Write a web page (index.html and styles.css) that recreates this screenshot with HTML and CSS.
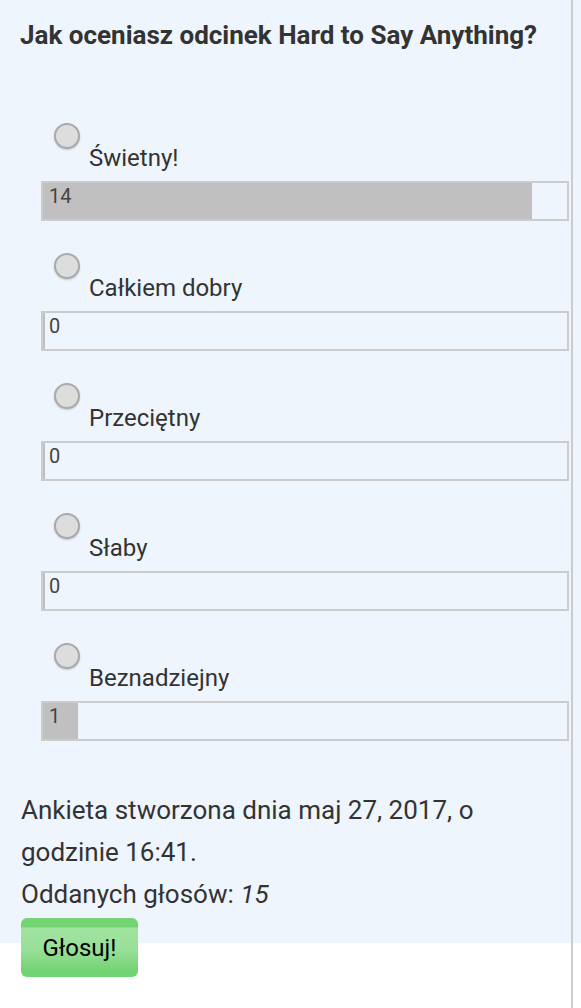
FILE: index.html
```html
<!DOCTYPE html>
<html lang="pl">
<head>
<meta charset="utf-8">
<title>Ankieta</title>
<link rel="stylesheet" href="styles.css">
</head>
<body>
<div class="panel">
  <h1 class="question">Jak oceniasz odcinek Hard to Say Anything?</h1>
  <ul class="options">
    <li class="option">
      <div class="choice"><span class="radio"></span><span class="label">Świetny!</span></div>
      <div class="bar"><div class="fill" style="width:93.333%"></div><span class="count">14</span></div>
    </li>
    <li class="option">
      <div class="choice"><span class="radio"></span><span class="label">Całkiem dobry</span></div>
      <div class="bar"><div class="fill" style="width:0%"></div><span class="count">0</span></div>
    </li>
    <li class="option">
      <div class="choice"><span class="radio"></span><span class="label">Przeciętny</span></div>
      <div class="bar"><div class="fill" style="width:0%"></div><span class="count">0</span></div>
    </li>
    <li class="option">
      <div class="choice"><span class="radio"></span><span class="label">Słaby</span></div>
      <div class="bar"><div class="fill" style="width:0%"></div><span class="count">0</span></div>
    </li>
    <li class="option">
      <div class="choice"><span class="radio"></span><span class="label">Beznadziejny</span></div>
      <div class="bar"><div class="fill" style="width:6.667%"></div><span class="count">1</span></div>
    </li>
  </ul>
  <p class="meta">Ankieta stworzona dnia maj 27, 2017, o godzinie 16:41.</p>
  <p class="meta">Oddanych głosów: <em>15</em></p>
  <button class="vote" type="button">Głosuj!</button>
</div>
</body>
</html>
```

FILE: styles.css
```css
html, body {
  margin: 0;
  padding: 0;
  background: #ffffff;
}
body {
  font-family: Roboto, "Liberation Sans", sans-serif;
  color: #333333;
  min-height: 1008px;
}
body::after {
  content: "";
  position: fixed;
  top: 0;
  bottom: 0;
  left: 571px;
  width: 2px;
  background: #cccccc;
}
.panel {
  display: flow-root;
  background: #eef5fd;
  padding: 20px 12px 0 0;
}
.question {
  margin: 0 0 0 20px;
  font-size: 26px;
  line-height: 30px;
  font-weight: 700;
  color: #333333;
}
.options {
  list-style: none;
  margin: 73px 0 0 0;
  padding: 0 0 0 41px;
}
.option {
  margin-bottom: 32px;
}
.option:last-child {
  margin-bottom: 0;
}
.choice {
  display: flex;
  align-items: flex-start;
}
.radio {
  width: 22px;
  height: 22px;
  margin-left: 13px;
  border: 2px solid #aaaaaa;
  border-radius: 50%;
  background: #dddddd;
  box-shadow: 0 1px 2px rgba(0, 0, 0, 0.18);
  flex: none;
}
.label {
  margin-left: 9px;
  padding-top: 21px;
  font-size: 24px;
  line-height: 28px;
}
.bar {
  margin-top: 9px;
  border: 2px solid #cccccc;
  height: 36px;
  display: grid;
  grid-template-columns: 1fr;
  grid-template-rows: 36px;
}
.fill {
  grid-area: 1 / 1;
  background: #c0c0c0;
  min-width: 2px;
  height: 36px;
}
.count {
  grid-area: 1 / 1;
  padding-left: 6px;
  font-size: 20px;
  line-height: 26px;
  color: #444444;
}
.meta {
  margin: 0 0 0 21px;
  font-size: 26px;
  line-height: 42px;
}
.options + .meta {
  margin-top: 48px;
}
.meta em {
  font-style: italic;
}
.vote {
  display: block;
  margin: 3px 0 -34px 21px;
  width: 117px;
  height: 59px;
  border: 0;
  border-radius: 6px;
  padding: 0;
  font-family: Roboto, "Liberation Sans", sans-serif;
  font-size: 24px;
  color: #000000;
  background: linear-gradient(to bottom, #74d474 0%, #74d474 15%, #a0e3a0 17%, #98df98 55%, #72d372 90%, #72d372 100%);
}
```
